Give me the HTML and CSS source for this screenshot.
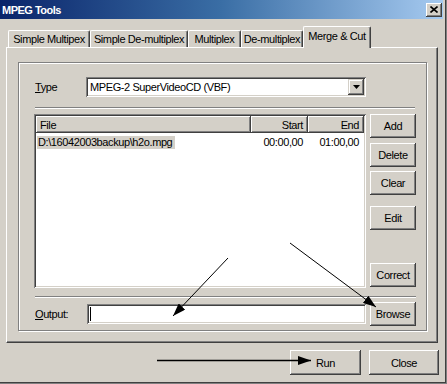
FILE: index.html
```html
<!DOCTYPE html>
<html>
<head>
<meta charset="utf-8">
<title>MPEG Tools</title>
<link rel="stylesheet" href="styles.css">
</head>
<body>
<div class="window">
  <div class="titlebar">
    <span class="title">MPEG Tools</span>
    <span class="close-btn"><svg width="8" height="7" viewBox="0 0 8 7"><path d="M0.5 0.5 L7.5 6.5 M7.5 0.5 L0.5 6.5" stroke="#000" stroke-width="1.6"/></svg></span>
  </div>
  <div class="tabs">
    <div class="tab t1">Simple Multipex</div>
    <div class="tab t2">Simple De-multiplex</div>
    <div class="tab t3">Multiplex</div>
    <div class="tab t4">De-multiplex</div>
    <div class="tab t5 active">Merge &amp; Cut</div>
  </div>
  <div class="panel">
    <div class="group">
      <div class="type-row">
        <span class="label type-label"><u>T</u>ype</span>
        <div class="combo">
          <span class="combo-text">MPEG-2 SuperVideoCD (VBF)</span>
          <span class="combo-btn"><svg width="7" height="4" viewBox="0 0 7 4"><path d="M0 0 H7 L3.5 4 Z" fill="#000"/></svg></span>
        </div>
      </div>
      <div class="sep sep1"></div>
      <div class="list-row">
        <div class="list">
          <div class="list-header">
            <div class="col col-file">File</div>
            <div class="col col-start">Start</div>
            <div class="col col-end">End</div>
          </div>
          <div class="list-item">
            <div class="cell cell-file"><span class="sel">D:\16042003backup\h2o.mpg</span></div>
            <div class="cell cell-start">00:00,00</div>
            <div class="cell cell-end">01:00,00</div>
          </div>
        </div>
        <div class="side-buttons">
          <div class="btn b-add">Add</div>
          <div class="btn b-delete">Delete</div>
          <div class="btn b-clear">Clear</div>
          <div class="btn b-edit">Edit</div>
          <div class="btn b-correct">Correct</div>
        </div>
      </div>
      <div class="sep sep2"></div>
      <div class="output-row">
        <span class="label out-label"><u>O</u>utput:</span>
        <div class="textbox"><span class="caret"></span></div>
        <div class="btn b-browse">Browse</div>
      </div>
    </div>
  </div>
  <div class="footer">
    <div class="btn b-run">Run</div>
    <div class="btn b-close">Close</div>
  </div>
  <svg class="annotations" width="447" height="384" viewBox="0 0 447 384">
    <defs>
      <marker id="ah" markerWidth="13" markerHeight="9" refX="13" refY="4.5" orient="auto" markerUnits="userSpaceOnUse">
        <path d="M0 0 L13 4.5 L0 9 Z" fill="#000"/>
      </marker>
    </defs>
    <line x1="290" y1="243" x2="376" y2="307" stroke="#000" stroke-width="1" marker-end="url(#ah)"/>
    <line x1="228" y1="258" x2="173" y2="316" stroke="#000" stroke-width="1" marker-end="url(#ah)"/>
    <line x1="157" y1="360.5" x2="311" y2="360.5" stroke="#000" stroke-width="1.4" marker-end="url(#ah)"/>
  </svg>
</div>
</body>
</html>
```
FILE: styles.css
```css
html, body {
  margin: 0;
  padding: 0;
  background: #d4d0c8;
}
body {
  font-family: "Liberation Sans", Arial, sans-serif;
  font-size: 11px;
  letter-spacing: -0.4px;
  color: #000;
}
.window {
  position: relative;
  width: 447px;
  height: 384px;
  background: #d4d0c8;
  box-shadow: inset -1px -1px 0 #808080, inset -2px -2px 0 #404040;
  overflow: hidden;
  box-sizing: border-box;
  padding-bottom: 2px;
}
.titlebar {
  height: 19px;
  width: 443px;
  background: linear-gradient(to right, #0a246a 0%, #3a6ea5 50%, #a6caf0 100%);
  display: flex;
  align-items: center;
  justify-content: space-between;
}
.title {
  color: #fff;
  font-weight: bold;
  padding-left: 2px;
  letter-spacing: -0.5px;
}
.close-btn {
  width: 16px;
  height: 14px;
  margin-right: 1px;
  background: #d4d0c8;
  box-shadow: inset -1px -1px 0 #404040, inset 1px 1px 0 #fff, inset -2px -2px 0 #808080;
  display: flex;
  align-items: center;
  justify-content: center;
}
.close-btn svg { display: block; margin-top: -1px; margin-left: -1px; }

.tabs {
  display: flex;
  align-items: flex-end;
  height: 21px;
  margin-top: 7px;
  margin-left: 8px;
  position: relative;
  z-index: 2;
}
.tab {
  height: 17px;
  box-sizing: border-box;
  border-top: 1px solid #fff;
  border-left: 1px solid #fff;
  border-right: 1px solid #404040;
  border-radius: 2px 2px 0 0;
  box-shadow: inset -1px 0 0 #808080;
  background: #d4d0c8;
  display: flex;
  align-items: center;
  justify-content: center;
  white-space: nowrap;
}
.t1 { width: 82px; }
.t2 { width: 98px; }
.t3 { width: 53px; }
.t4 { width: 62px; }
.t5 { width: 68px; }
.tab.active {
  height: 22px;
  margin-bottom: -1px;
  padding-bottom: 4px;
}

.panel {
  position: relative;
  z-index: 1;
  margin-left: 6px;
  width: 432px;
  height: 296px;
  box-sizing: border-box;
  border-top: 1px solid #fff;
  border-left: 1px solid #fff;
  border-right: 1px solid #404040;
  border-bottom: 1px solid #404040;
  box-shadow: inset -1px -1px 0 #808080;
  padding: 14px 0 0 11px;
}
.group {
  width: 409px;
  height: 269px;
  box-sizing: border-box;
  border: 1px solid #808080;
  box-shadow: 1px 1px 0 #fff, inset 1px 1px 0 #fff;
  padding: 14px 0 0 15px;
}
.type-row {
  display: flex;
  align-items: center;
  height: 20px;
}
.label {
  padding-left: 1px;
  box-sizing: border-box;
  white-space: nowrap;
}
.type-label { width: 52px; }
.combo {
  width: 280px;
  height: 20px;
  box-sizing: border-box;
  background: #fff;
  box-shadow: inset 1px 1px 0 #808080, inset -1px -1px 0 #fff, inset 2px 2px 0 #404040, inset -2px -2px 0 #d4d0c8;
  display: flex;
  align-items: center;
  justify-content: space-between;
  padding: 2px;
}
.combo-text {
  padding-left: 2px;
  white-space: nowrap;
}
.combo-btn {
  width: 16px;
  height: 16px;
  box-sizing: border-box;
  background: #d4d0c8;
  box-shadow: inset -1px -1px 0 #404040, inset 1px 1px 0 #d4d0c8, inset -2px -2px 0 #808080, inset 2px 2px 0 #fff;
  display: flex;
  align-items: center;
  justify-content: center;
}
.combo-btn svg { display: block; }

.sep {
  height: 0;
  border-top: 1px solid #808080;
  border-bottom: 1px solid #fff;
  margin-left: 1px;
}
.sep1 { width: 380px; margin-top: 10px; }
.sep2 { width: 381px; margin-top: 8px; }

.list-row {
  display: flex;
  margin-top: 5px;
}
.list {
  width: 332px;
  height: 174px;
  box-sizing: border-box;
  background: #fff;
  box-shadow: inset 1px 1px 0 #808080, inset -1px -1px 0 #fff, inset 2px 2px 0 #404040, inset -2px -2px 0 #d4d0c8;
  padding: 2px;
}
.list-header {
  display: flex;
  height: 17px;
}
.col {
  box-sizing: border-box;
  background: #d4d0c8;
  box-shadow: inset -1px -1px 0 #404040, inset 1px 1px 0 #fff, inset -2px -2px 0 #808080;
  display: flex;
  align-items: center;
  height: 17px;
}
.col-file { width: 215px; padding-left: 4px; }
.col-start { width: 57px; justify-content: flex-end; padding-right: 5px; }
.col-end { width: 56px; justify-content: flex-end; padding-right: 5px; }
.list-item {
  display: flex;
  height: 14px;
  margin-top: 2px;
}
.cell {
  box-sizing: border-box;
  display: flex;
  align-items: center;
  white-space: nowrap;
}
.cell-file { width: 215px; padding-left: 1px; }
.cell-start { width: 57px; justify-content: flex-end; padding-right: 5px; }
.cell-end { width: 56px; justify-content: flex-end; padding-right: 5px; }
.sel {
  background: #d4d0c8;
  padding: 0 3px 0 1px;
  line-height: 13px;
}

.side-buttons {
  display: flex;
  flex-direction: column;
  margin-left: 4px;
  width: 46px;
}
.btn {
  box-sizing: border-box;
  background: #d4d0c8;
  box-shadow: inset -1px -1px 0 #404040, inset 1px 1px 0 #fff, inset -2px -2px 0 #808080;
  display: flex;
  align-items: center;
  justify-content: center;
  white-space: nowrap;
  height: 24px;
}
.side-buttons .btn { width: 46px; }
.b-delete { margin-top: 5px; }
.b-clear { margin-top: 4px; }
.b-edit { margin-top: 11px; }
.b-correct { margin-top: 33px; }

.output-row {
  display: flex;
  align-items: center;
  height: 24px;
  margin-top: 4px;
}
.out-label { width: 53px; }
.textbox {
  width: 279px;
  height: 20px;
  box-sizing: border-box;
  background: #fff;
  box-shadow: inset 1px 1px 0 #808080, inset -1px -1px 0 #fff, inset 2px 2px 0 #404040, inset -2px -2px 0 #d4d0c8;
  display: flex;
  align-items: center;
  padding-left: 3px;
}
.caret {
  width: 1px;
  height: 14px;
  background: #000;
}
.b-browse { width: 46px; margin-left: 4px; }

.footer {
  display: flex;
  justify-content: flex-end;
  margin-top: 7px;
  margin-right: 8px;
}
.b-run { width: 71px; height: 25px; }
.b-close { width: 70px; height: 25px; margin-left: 8px; }

.annotations {
  position: absolute;
  left: 0;
  top: 0;
  pointer-events: none;
  z-index: 5;
}
```
